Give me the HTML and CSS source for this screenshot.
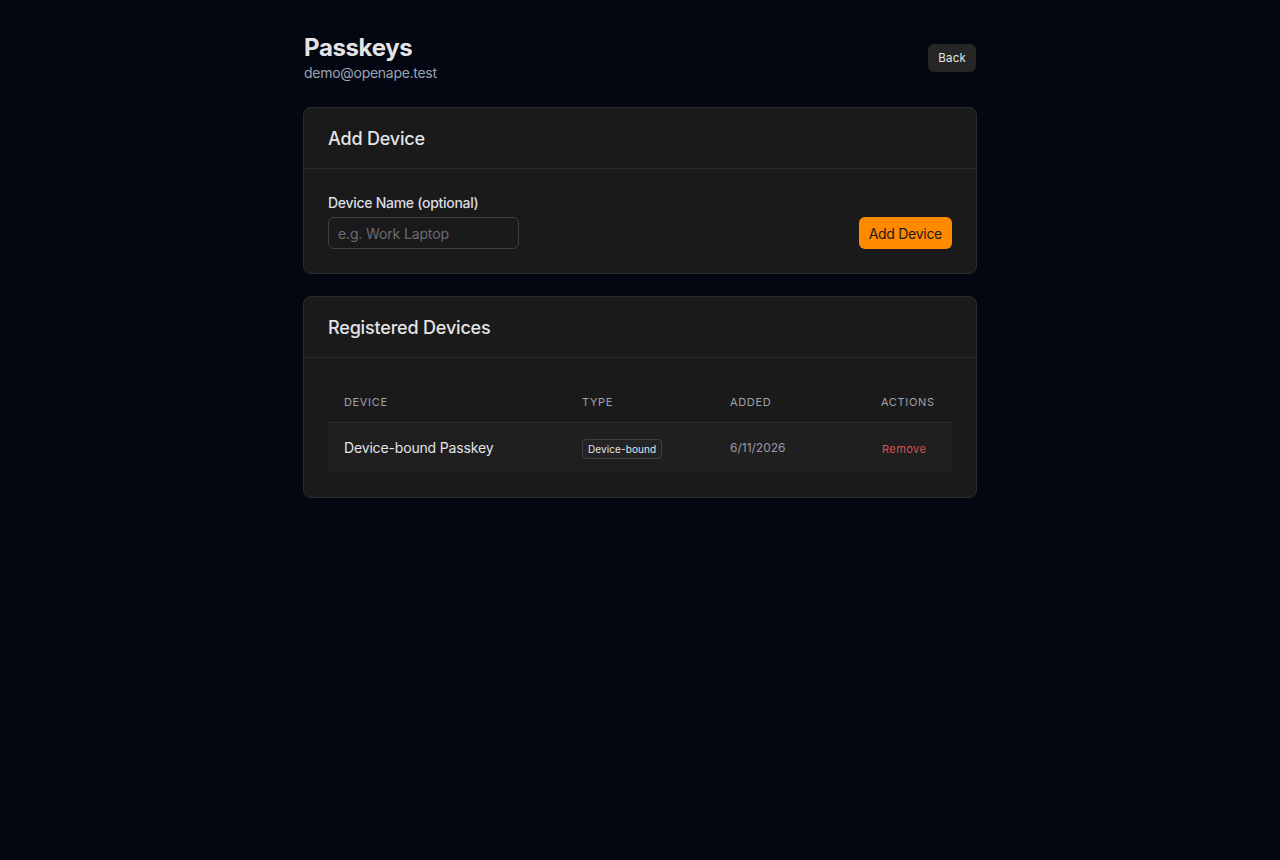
FILE: index.html
```html
<!DOCTYPE html>
<html lang="en">
<head>
  <meta charset="utf-8">
  <title>Passkeys</title>
  <link rel="stylesheet" href="styles.css">
</head>
<body>
<div class="page">
  <div class="page-header">
    <div>
      <h1>Passkeys</h1>
      <p class="email">demo@openape.test</p>
    </div>
    <button class="btn-back">Back</button>
  </div>

  <div class="card">
    <div class="card-header">
      <h2>Add Device</h2>
    </div>
    <div class="card-body add-row">
      <div class="field">
        <label for="deviceName">Device Name (optional)</label>
        <input type="text" id="deviceName" placeholder="e.g. Work Laptop">
      </div>
      <button class="btn-primary">Add Device</button>
    </div>
  </div>

  <div class="card">
    <div class="card-header">
      <h2>Registered Devices</h2>
    </div>
    <div class="card-body">
      <table class="devices">
        <thead>
          <tr>
            <th class="col-device">Device</th>
            <th class="col-type">Type</th>
            <th class="col-added">Added</th>
            <th class="col-actions">Actions</th>
          </tr>
        </thead>
        <tbody>
          <tr>
            <td class="name">Device-bound Passkey</td>
            <td><span class="badge">Device-bound</span></td>
            <td class="date">6/11/2026</td>
            <td><button class="btn-remove">Remove</button></td>
          </tr>
        </tbody>
      </table>
    </div>
  </div>
</div>
</body>
</html>
```

FILE: styles.css
```css
body {
  margin: 0;
  background-color: #030712;
  color: #e5e5e5;
  font-family: Inter, "Noto Sans", sans-serif;
  letter-spacing: -0.01em;
}

.page {
  width: 672px;
  margin: 0 auto;
  padding-top: 32px;
}

.page-header {
  display: flex;
  justify-content: space-between;
  align-items: center;
  margin-bottom: 24px;
}

h1 {
  margin: 0;
  font-size: 24px;
  line-height: 30px;
  font-weight: 700;
  color: #e4e4e7;
  letter-spacing: -0.015em;
  padding-top: 1px;
}

.email {
  margin: 0;
  font-size: 14px;
  line-height: 20px;
  color: #9ca3af;
  letter-spacing: -0.02em;
}

.btn-back {
  height: 28px;
  padding: 0 10px;
  border: none;
  border-radius: 6px;
  background-color: #262626;
  color: #e5e5e5;
  font-family: inherit;
  font-size: 11.5px;
  letter-spacing: 0.02em;
}

/* Cards */
.card {
  background-color: #1a1a1b;
  border: 1px solid #2b2b2e;
  border-radius: 8px;
  margin-bottom: 22px;
  margin-left: -1px;
  margin-right: -1px;
}

.card-header {
  height: 60px;
  padding: 0 24px;
  display: flex;
  align-items: center;
  border-bottom: 1px solid #2b2b2e;
}

h2 {
  margin: 0;
  font-size: 18px;
  font-weight: 500;
  color: #e4e4e7;
  letter-spacing: -0.01em;
}

.card-body {
  padding: 24px;
}

.add-row {
  display: flex;
  justify-content: space-between;
  align-items: flex-end;
}

.field label {
  display: block;
  font-size: 14px;
  font-weight: 500;
  line-height: 20px;
  margin-bottom: 4px;
  color: #dcdce0;
  letter-spacing: -0.02em;
}

.field input {
  box-sizing: border-box;
  width: 191px;
  height: 32px;
  padding: 0 9px;
  background-color: #1a1a1b;
  border: 1px solid #3f3f46;
  border-radius: 6px;
  color: #e5e5e5;
  font-family: inherit;
  font-size: 14px;
  letter-spacing: -0.01em;
}

.field input::placeholder {
  color: #6b6b73;
}

.btn-primary {
  height: 32px;
  padding: 0 10px;
  border: none;
  border-radius: 6px;
  background-color: #ff8a00;
  color: #1a1a1a;
  font-family: inherit;
  font-size: 14px;
  font-weight: 400;
  letter-spacing: -0.02em;
}

/* Devices table */
.devices {
  width: 100%;
  border-collapse: collapse;
}

.devices th {
  height: 40px;
  padding: 0 16px;
  text-align: left;
  font-size: 11px;
  font-weight: 400;
  letter-spacing: 0.06em;
  text-transform: uppercase;
  color: #a1a1aa;
}

.col-device { width: 206px; }
.col-type { width: 116px; }
.col-added { width: 119px; }

.devices tbody tr {
  height: 50px;
  background-color: #1f1f20;
  border-top: 1px solid #2b2b2e;
}

.devices td {
  padding: 0 16px;
  font-size: 14px;
}

.devices td.name {
  color: #e4e4e7;
}

.devices td.date {
  font-size: 12px;
  color: #9a9aa2;
  letter-spacing: 0;
}

.badge {
  display: inline-block;
  padding: 0 5px;
  height: 18px;
  line-height: 18px;
  border: 1px solid #3f3f46;
  border-radius: 4px;
  background-color: #232325;
  font-size: 10px;
  color: #e4e4e7;
  letter-spacing: 0.01em;
  margin-top: 2px;
}

.btn-remove {
  border: none;
  background: none;
  padding: 0 1px;
  color: #d9534f;
  font-family: inherit;
  font-size: 11px;
  letter-spacing: 0.04em;
  margin-top: 2px;
}
```
